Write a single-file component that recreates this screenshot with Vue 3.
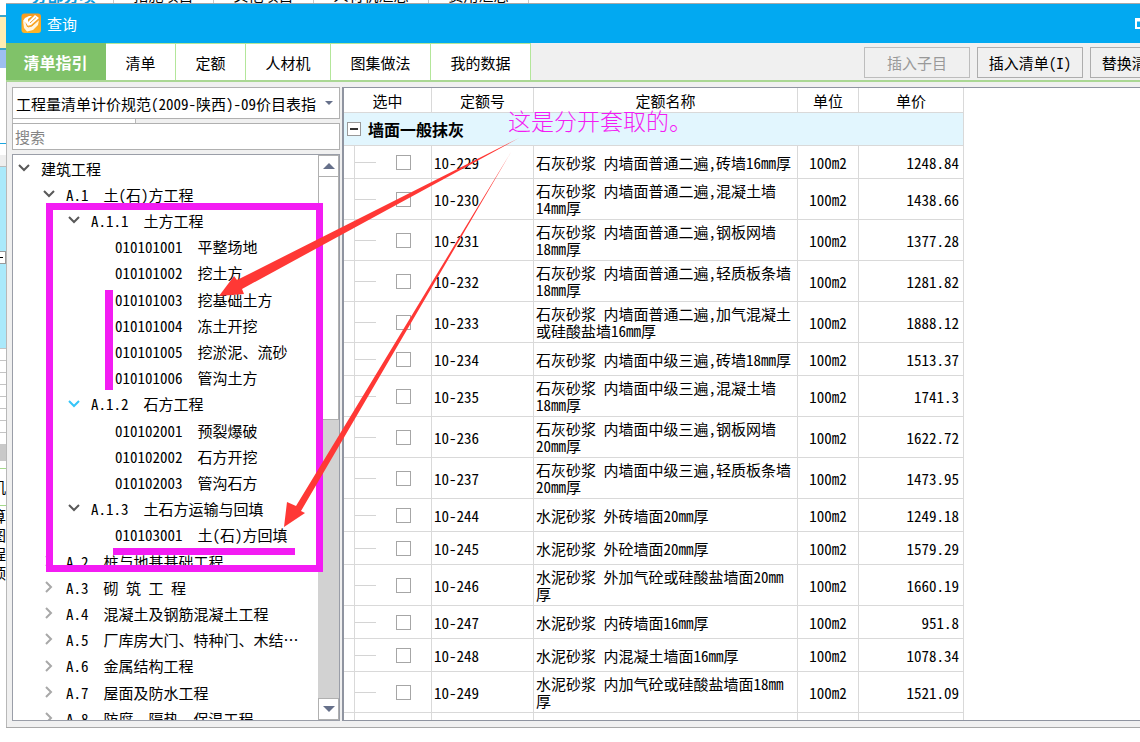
<script setup>
import { ref } from 'vue'

const backTabs = [
  { label: '分部分项', width: 100, active: true },
  { label: '措施项目', width: 100 },
  { label: '其他项目', width: 100 },
  { label: '人材机汇总', width: 115 },
  { label: '费用汇总', width: 100 },
]
const tabs = [
  { label: '清单指引', size: 'active' },
  { label: '清单', size: 'short' },
  { label: '定额', size: 'short' },
  { label: '人材机', size: 'medium' },
  { label: '图集做法', size: 'long' },
  { label: '我的数据', size: 'long' },
]
const tree = [
  { level: 0, text: '建筑工程', open: true },
  { level: 1, text: 'A.1  土(石)方工程', open: true },
  { level: 2, text: 'A.1.1  土方工程', open: true },
  { level: 3, text: '010101001  平整场地' },
  { level: 3, text: '010101002  挖土方' },
  { level: 3, text: '010101003  挖基础土方' },
  { level: 3, text: '010101004  冻土开挖' },
  { level: 3, text: '010101005  挖淤泥、流砂' },
  { level: 3, text: '010101006  管沟土方' },
  { level: 2, text: 'A.1.2  石方工程', open: true, hot: true },
  { level: 3, text: '010102001  预裂爆破' },
  { level: 3, text: '010102002  石方开挖' },
  { level: 3, text: '010102003  管沟石方' },
  { level: 2, text: 'A.1.3  土石方运输与回填', open: true },
  { level: 3, text: '010103001  土(石)方回填' },
  { level: 1, text: 'A.2  桩与地基基础工程', open: false },
  { level: 1, text: 'A.3  砌 筑 工 程', open: false },
  { level: 1, text: 'A.4  混凝土及钢筋混凝土工程', open: false },
  { level: 1, text: 'A.5  厂库房大门、特种门、木结…', open: false },
  { level: 1, text: 'A.6  金属结构工程', open: false },
  { level: 1, text: 'A.7  屋面及防水工程', open: false },
  { level: 1, text: 'A.8  防腐、隔热、保温工程', open: false },
]
const rows = ref([
  { code: '10-229', name: '石灰砂浆 内墙面普通二遍,砖墙16mm厚', price: '1248.84' },
  { code: '10-230', name: '石灰砂浆 内墙面普通二遍,混凝土墙14mm厚', price: '1438.66', tall: true },
  { code: '10-231', name: '石灰砂浆 内墙面普通二遍,钢板网墙18mm厚', price: '1377.28', tall: true },
  { code: '10-232', name: '石灰砂浆 内墙面普通二遍,轻质板条墙18mm厚', price: '1281.82', tall: true },
  { code: '10-233', name: '石灰砂浆 内墙面普通二遍,加气混凝土或硅酸盐墙16mm厚', price: '1888.12', tall: true },
  { code: '10-234', name: '石灰砂浆 内墙面中级三遍,砖墙18mm厚', price: '1513.37' },
  { code: '10-235', name: '石灰砂浆 内墙面中级三遍,混凝土墙18mm厚', price: '1741.3', tall: true },
  { code: '10-236', name: '石灰砂浆 内墙面中级三遍,钢板网墙20mm厚', price: '1622.72', tall: true },
  { code: '10-237', name: '石灰砂浆 内墙面中级三遍,轻质板条墙20mm厚', price: '1473.95', tall: true },
  { code: '10-244', name: '水泥砂浆 外砖墙面20mm厚', price: '1249.18' },
  { code: '10-245', name: '水泥砂浆 外砼墙面20mm厚', price: '1579.29' },
  { code: '10-246', name: '水泥砂浆 外加气砼或硅酸盐墙面20mm厚', price: '1660.19', tall: true },
  { code: '10-247', name: '水泥砂浆 内砖墙面16mm厚', price: '951.8' },
  { code: '10-248', name: '水泥砂浆 内混凝土墙面16mm厚', price: '1078.34' },
  { code: '10-249', name: '水泥砂浆 内加气砼或硅酸盐墙面18mm厚', price: '1521.09', tall: true },
])
const picked = ref([])
const keyword = ref('')
</script>

<template>
  <div class="screen">
    <div class="back-tabs" aria-hidden="true">
      <span v-for="t in backTabs" :key="t.label" :class="{ current: t.active }" :style="{ width: t.width + 'px' }">{{ t.label }}</span>
    </div>
    <div class="middle">
      <div class="back-edge" aria-hidden="true">
        <i class="e-top"></i><i class="e-yellow"></i><i class="e-select"></i><i class="e-white"></i>
        <i class="e-head"></i><i class="e-cyan"></i><i class="e-box"></i><i class="e-cyan"></i>
        <i v-for="n in 8" :key="n" class="e-row"></i>
        <i class="e-gray"></i><i class="e-green"></i>
        <b class="e-label">机</b><b>算</b><b>图</b><b>程</b><b>顶</b>
      </div>

      <main class="window">
        <header class="titlebar">
          <svg class="logo" width="21" height="21" viewBox="0 0 21 21">
            <defs>
              <linearGradient id="amber" x1="0" y1="0" x2="0" y2="1">
                <stop offset="0" stop-color="#f79a1e" /><stop offset="1" stop-color="#ffb528" />
              </linearGradient>
            </defs>
            <rect x="0.5" y="0.5" width="19.5" height="19.5" rx="3" fill="url(#amber)" />
            <path d="M2 8 L4 5 L8 3 L11 3 L7 6 L7 9 L14 2 L18 5 L10 12 L6 13 L5 10 Z" fill="#fff" />
            <path d="M2 8 L5 10 L6 14 L11 13 L18 7 L17 12 L12 17 L6 18.5 L3 15 Z" fill="#fff6e2" />
            <path d="M5 10.5 L7 14 L11 13 L18 6.5 M9 10 L15 4.5" stroke="#f6a12a" stroke-width="1" fill="none" />
          </svg>
          <h1>查询</h1>
          <button class="restore" aria-label="还原">
            <svg width="11" height="11" viewBox="0 0 11 11"><path d="M1 1 H10 V10 H1 Z M1 2.5 H10" fill="none" stroke="#fff" stroke-width="2" /></svg>
          </button>
        </header>

        <nav class="toolbar">
          <button v-for="t in tabs" :key="t.label" class="tab" :class="t.size">{{ t.label }}</button>
          <div class="actions">
            <button disabled>插入子目</button>
            <button>插入清单(I)</button>
            <button>替换清单(R)</button>
          </div>
        </nav>

        <div class="content">
          <section class="side">
            <div class="combo">
              <select aria-label="计价规范">
                <option>工程量清单计价规范(2009-陕西)-09价目表指</option>
              </select>
              <svg width="8" height="4" viewBox="0 0 8 4"><path d="M0 0 H8 L4 4 Z" fill="#66708a" /></svg>
            </div>
            <div class="stub"></div>
            <input v-model="keyword" class="search" type="text" placeholder="搜索" aria-label="搜索" />
            <div class="tree">
              <ul>
                <li v-for="n in tree" :key="n.text" :class="'level' + n.level">
                  <svg v-if="n.open === true" class="chev" :class="{ hot: n.hot }" width="12" height="12" viewBox="0 0 12 12"><path d="M1 3 L6 8 L11 3" /></svg>
                  <svg v-else-if="n.open === false" class="chev closed" width="12" height="12" viewBox="0 0 12 12"><path d="M3 1 L8 6 L3 11" /></svg>
                  <span>{{ n.text }}</span>
                </li>
              </ul>
              <div class="scroll">
                <button aria-label="向上滚动"><svg width="12" height="6" viewBox="0 0 12 6"><path d="M0 6 H12 L6 0 Z" fill="#66708a" /></svg></button>
                <div class="thumb"></div>
                <div class="track"></div>
                <button class="down" aria-label="向下滚动"><svg width="12" height="6" viewBox="0 0 12 6"><path d="M0 0 H12 L6 6 Z" fill="#66708a" /></svg></button>
              </div>
            </div>
          </section>

          <section class="grid">
            <table>
              <colgroup>
                <col class="c-pick" /><col class="c-code" /><col class="c-name" /><col class="c-unit" /><col class="c-price" />
              </colgroup>
              <thead>
                <tr><th>选中</th><th>定额号</th><th>定额名称</th><th>单位</th><th>单价</th></tr>
              </thead>
              <tbody>
                <tr class="group">
                  <td colspan="5">
                    <div><button aria-label="折叠"></button><strong>墙面一般抹灰</strong></div>
                  </td>
                </tr>
                <tr v-for="r in rows" :key="r.code" :class="{ tall: r.tall }">
                  <td class="pick">
                    <div><i></i><input v-model="picked" type="checkbox" :value="r.code" :aria-label="r.code" /></div>
                  </td>
                  <td>{{ r.code }}</td>
                  <td class="name">{{ r.name }}</td>
                  <td class="unit">100m2</td>
                  <td class="price">{{ r.price }}</td>
                </tr>
                <tr><td class="pick"><div></div></td><td></td><td></td><td></td><td></td></tr>
              </tbody>
            </table>
          </section>
        </div>
      </main>
    </div>

    <svg class="marks" width="1140" height="742" viewBox="0 0 1140 742">
      <rect x="49.5" y="206.5" width="270" height="362" fill="none" stroke="#f31cf3" stroke-width="7" />
      <rect x="105" y="290" width="8" height="100" fill="#f31cf3" />
      <rect x="113" y="548" width="182" height="7" fill="#f31cf3" />
      <path d="M519 138 L237 280 L234 276 L219 296 L244 294 L242 289 Z" fill="#ff3835" />
      <path d="M511 152 L296 506 L287 502 L284 527 L305 513 L301 511 Z" fill="#ff3835" />
    </svg>
    <p class="remark">这是分开套取的。</p>
  </div>
</template>

<style>
body {
  margin: 0;
  background: #fff;
  overflow: hidden;
}
</style>

<style scoped>
.screen {
  position: relative;
  box-sizing: border-box;
  height: 100vh;
  padding-bottom: 14px;
  display: flex;
  flex-direction: column;
  overflow: hidden;
  background: #fff;
  color: #000;
  font-family: "Noto Sans Mono CJK SC", "Noto Sans CJK SC", monospace;
  font-size: 15px;
  line-height: 17px;
}
button, input, select {
  font: inherit;
  color: inherit;
  margin: 0;
  padding: 0;
  border-radius: 0;
}

/* window behind the dialog */
.back-tabs {
  flex: none;
  display: flex;
  align-items: flex-end;
  height: 3px;
  padding-left: 14px;
  overflow: hidden;
}
.back-tabs span {
  box-sizing: border-box;
  flex: none;
  border-right: 1px solid #c8c8c8;
  text-align: center;
  line-height: 16px;
}
.back-tabs .current {
  color: #0a9be0;
  font-weight: bold;
  font-size: 16px;
}
.middle {
  flex: 1;
  min-height: 0;
  display: flex;
}
.back-edge {
  flex: none;
  width: 6px;
  display: flex;
  flex-direction: column;
  align-items: flex-end;
  overflow: hidden;
}
.back-edge i {
  flex: none;
  box-sizing: border-box;
  width: 6px;
}
.e-top { height: 14px; border-bottom: 2px solid #3aa5cc; }
.e-yellow { height: 33px; background: #ffedb3; border-bottom: 2px solid #3aa5cc; }
.e-select { height: 18px; background: #9dbff0; }
.e-white { height: 76px; border-bottom: 1px solid #1ba6e0; }
.e-head { height: 23px; border-top: 11px solid #fff; border-bottom: 1px solid #bbb; background: #eee; }
.e-cyan { height: 84px; background: #aae9fb; }
.e-box { height: 13px; border: solid #999; border-width: 1px 1px 1px 0; background: linear-gradient(#000, #000) 0 5px / 3px 1px no-repeat; }
.e-row { height: 12px; border-top: 1px solid #c4c4c4; }
.e-gray { height: 17px; background: #c8c8c8; }
.e-green { height: 8px; border-bottom: 1px solid #a5da8c; }
.back-edge b {
  flex: none;
  font-weight: normal;
  line-height: 19px;
}
.back-edge .e-label {
  line-height: 36px;
  border-bottom: 1px solid #a5da8c;
}

/* dialog */
.window {
  flex: 1;
  min-width: 0;
  display: flex;
  flex-direction: column;
  border: solid #a8a8a8;
  border-width: 1px 0 1px 0;
  background: #f0f0f0;
  overflow: hidden;
}
.titlebar {
  flex: none;
  display: flex;
  align-items: center;
  height: 39px;
  padding-left: 15px;
  background: #02a9f1;
  color: #fff;
}
.titlebar h1 {
  margin: 0 0 0 5px;
  font-size: 15px;
  font-weight: normal;
}
.restore {
  margin: 0 -6px 0 auto;
  display: flex;
  border: 0;
  background: none;
}
.toolbar {
  flex: none;
  display: flex;
  height: 37px;
  border-bottom: 2px solid #aad794;
}
.tab {
  flex: none;
  border: solid #b3e69a;
  border-width: 1px 1px 0 0;
  background: #fff;
}
.tab.active {
  width: 100px;
  border-color: #80c269;
  background: #80c269;
  color: #fff;
  font-size: 16px;
  font-weight: bold;
}
.tab.short { width: 70px; }
.tab.medium { width: 85px; }
.tab.long { width: 100px; }
.actions {
  flex: none;
  width: 276px;
  margin-left: auto;
  padding: 4px 0 2px;
  display: flex;
  gap: 7px;
  overflow: hidden;
}
.actions button {
  flex: none;
  width: 106px;
  border: 1px solid #adadad;
  background: #f0f0f0;
}
.actions button:disabled {
  border-color: #bdbdbd;
  color: #999;
}

.content {
  flex: 1;
  min-height: 0;
  display: flex;
  gap: 2px;
  padding: 5px 0 6px 5px;
  border-left: 1px solid #b8b8b8;
}
.side {
  flex: none;
  width: 328px;
  display: flex;
  flex-direction: column;
}
.combo {
  flex: none;
  box-sizing: border-box;
  height: 32px;
  display: flex;
  align-items: center;
  padding-right: 6px;
  border: 1px solid #b0b0b0;
  background: #fff;
}
.combo select {
  appearance: none;
  flex: 1;
  min-width: 0;
  height: 30px;
  padding-left: 3px;
  border: 0;
  background: #fff;
}
.stub {
  flex: none;
  box-sizing: border-box;
  width: 124px;
  height: 4px;
  border: solid #b8b8b8;
  border-width: 0 1px 0 1px;
  background: #fff;
}
.search {
  flex: none;
  box-sizing: border-box;
  width: 100%;
  height: 27px;
  padding: 0 2px;
  border: 1px solid #b0b0b0;
  background: #fff;
}
.search::placeholder {
  color: #858585;
  opacity: 1;
}
.tree {
  flex: 1;
  min-height: 0;
  margin-top: 4px;
  display: flex;
  border: 1px solid #9a9ea8;
  background: #fff;
  overflow: hidden;
}
.tree ul {
  flex: 1;
  min-width: 0;
  margin: 0;
  padding: 0;
  list-style: none;
  display: grid;
  grid-auto-rows: 26px 26px 26px 26px 27px;
}
.tree li {
  display: flex;
  align-items: center;
  white-space: pre;
}
.level0 { padding-left: 5px; }
.level1 { padding-left: 30px; }
.level2 { padding-left: 55px; }
.level3 { padding-left: 102px; }
.chev {
  flex: none;
  margin-right: 11px;
  fill: none;
  stroke: #595959;
  stroke-width: 2;
}
.chev.hot { stroke: #35c5f8; }
.chev.closed { stroke: #a8a8a8; }
.scroll {
  flex: none;
  width: 21px;
  display: flex;
  flex-direction: column;
  background: #d2d2d2;
}
.scroll button {
  flex: none;
  height: 22px;
  display: flex;
  align-items: center;
  justify-content: center;
  border: 1px solid #b0b0b0;
  background: #fff;
}
.thumb {
  flex: 243;
  border: solid #b0b0b0;
  border-width: 0 1px 1px;
  background: #fff;
}
.track { flex: 279; }

.grid {
  flex: 1;
  min-width: 0;
  border: solid #8f94a0;
  border-width: 1px 0 1px 2px;
  background: #fff;
  overflow: hidden;
}
table {
  width: 620px;
  table-layout: fixed;
  border-collapse: separate;
  border-spacing: 0;
}
.c-pick { width: 88px; }
.c-code { width: 102px; }
.c-name { width: 264px; }
.c-unit { width: 61px; }
.c-price { width: 105px; }
th, td {
  box-sizing: border-box;
  height: 33px;
  padding: 0 2px;
  border: solid #d9d9d9;
  border-width: 0 1px 1px 0;
  font-weight: normal;
  text-align: left;
}
th {
  height: 25px;
  text-align: center;
}
.tall td { height: 41px; }
.group td {
  padding: 0 3px;
  background: #e2f6fe;
}
.group div {
  display: flex;
  align-items: center;
  gap: 7px;
}
.group button {
  width: 14px;
  height: 14px;
  border: 1px solid #999;
  background: linear-gradient(#333, #333) 2px 5px / 8px 2px no-repeat #fff;
}
.group strong { font-size: 16px; }
td.pick { padding: 0 0 0 10px; }
.pick div {
  display: flex;
  align-items: center;
  height: 32px;
  border-left: 1px solid #d9d9d9;
}
.tall .pick div { height: 40px; }
.pick i {
  width: 21px;
  height: 1px;
  margin-right: 20px;
  background: #d4d4d4;
}
.pick input {
  appearance: none;
  width: 15px;
  height: 15px;
  border: 1px solid #a6a6a6;
  background: #fff;
}
.unit { text-align: center; }
.price {
  padding-right: 4px;
  text-align: right;
}

/* annotations drawn over the dialog */
.marks {
  position: absolute;
  left: 0;
  top: 0;
  pointer-events: none;
}
.remark {
  position: absolute;
  left: 508px;
  top: 106px;
  margin: 0;
  color: #f31cf3;
  font-family: "Noto Sans CJK SC", sans-serif;
  font-size: 23px;
  font-weight: 300;
  line-height: 28px;
}
</style>
